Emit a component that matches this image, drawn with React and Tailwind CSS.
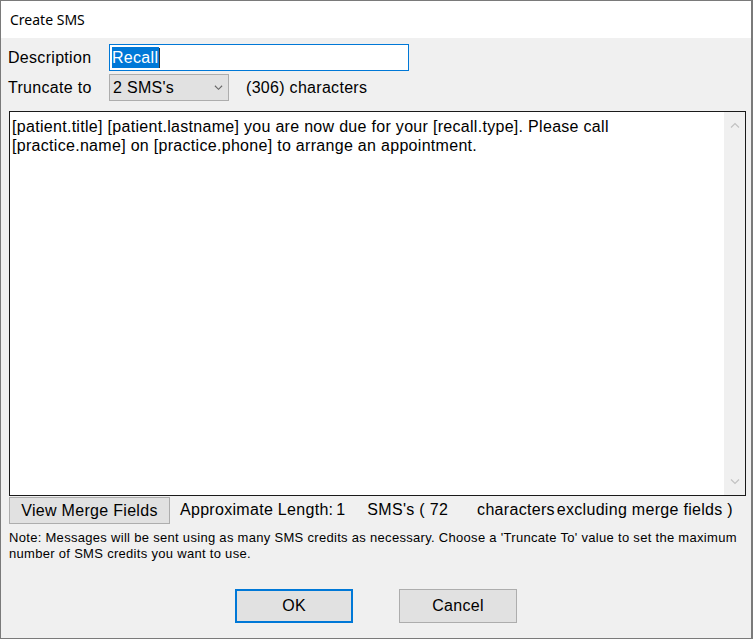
import React from 'react';

const sans = { fontFamily: '"Liberation Sans", Arial, sans-serif' };

// small chevron used by the select and the scrollbar arrows
const Chevron = ({ up = false, className = '' }) => (
  <svg width="10" height="6" viewBox="0 0 10 6" className={className}>
    <path
      d={up ? 'M1 5.5 L5 1.5 L9 5.5' : 'M1 0.5 L5 4.5 L9 0.5'}
      fill="none"
      stroke="currentColor"
      strokeWidth="1.2"
    />
  </svg>
);

export default function App() {
  return (
    <div
      className="w-[753px] h-[639px] flex flex-col bg-[#f0f0f0] border-t border-l border-b border-r-2 border-[#7a7a7a] text-black"
      style={sans}
    >
      {/* title bar */}
      <div className="h-[37px] bg-white flex items-center pl-[9px] text-[14px] shrink-0" style={{ fontFamily: '"Noto Sans", "Liberation Sans", sans-serif' }}>
        Create SMS
      </div>

      <div className="flex flex-col px-[7px] pt-[6px] flex-1 tracking-[0.3px]">
        {/* description */}
        <div className="flex items-center h-[27px]">
          <div className="w-[101px] text-[16px]">Description</div>
          <div className="w-[300px] h-[27px] border border-[#0078d7] bg-white flex items-center pl-[2px]">
            <span className="bg-[#0078d7] text-white text-[16px] leading-[21px] pr-[1px]">Recall</span>
            <span className="w-[1px] h-[20px] bg-[#333]"></span>
          </div>
        </div>

        {/* truncate */}
        <div className="flex items-center h-[27px] mt-[3px]">
          <div className="w-[101px] text-[16px]">Truncate to</div>
          <div className="w-[120px] h-[27px] border border-[#adadad] bg-[#e1e1e1] flex items-center justify-between pl-[3px] pr-[5px] text-[16px]">
            <span>2 SMS's</span>
            <Chevron className="text-[#666] w-[9px]" />
          </div>
          <div className="ml-[17px] text-[16px]">(306) characters</div>
        </div>

        {/* message body */}
        <div className="mt-[10px] ml-[1px] w-[737px] h-[385px] border border-[#1a1a1a] bg-white flex">
          <div className="flex-1 pl-[2px] pt-[5px] text-[16px] leading-[19px]">
            [patient.title] [patient.lastname] you are now due for your [recall.type]. Please call
            <br />
            [practice.name] on [practice.phone] to arrange an appointment.
          </div>
          <div className="w-[21px] bg-[#f0f0f0] flex flex-col items-center justify-between py-[10px] text-[#c2c2c2]">
            <Chevron up />
            <Chevron />
          </div>
        </div>

        {/* merge fields row */}
        <div className="flex items-center mt-[1px] h-[27px] text-[16px]">
          <div className="ml-[1px] w-[161px] h-[27px] border border-[#adadad] bg-[#e1e1e1] flex items-center justify-center">
            View Merge Fields
          </div>
          <div className="ml-[10px] flex items-center -mt-[1px]">
            <span>Approximate Length:</span>
            <span className="ml-[3px] w-[31px]">1</span>
            <span>SMS's ( 72</span>
            <span className="ml-[29px]">characters</span>
            <span className="ml-[2px]">excluding merge fields )</span>
          </div>
        </div>

        {/* note */}
        <div className="mt-[6px] ml-[1px] text-[13px] leading-[16px] tracking-[0.3px]">
          Note: Messages will be sent using as many SMS credits as necessary. Choose a 'Truncate To' value to set the maximum
          <br />
          number of SMS credits you want to use.
        </div>

        {/* buttons */}
        <div className="flex justify-center mt-[27px] gap-[46px]">
          <div className="w-[118px] h-[34px] border-2 border-[#0078d7] bg-[#e1e1e1] flex items-center justify-center text-[16px]">
            OK
          </div>
          <div className="w-[118px] h-[34px] border border-[#adadad] bg-[#e1e1e1] flex items-center justify-center text-[16px]">
            Cancel
          </div>
        </div>
      </div>
    </div>
  );
}
